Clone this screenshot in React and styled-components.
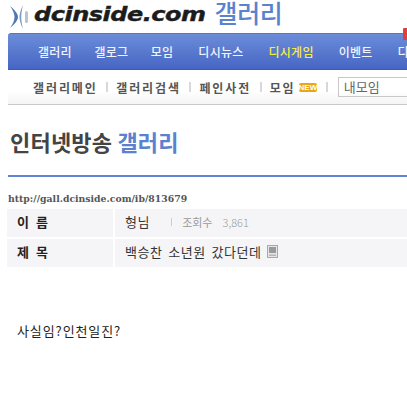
import React from "react";
import styled, { createGlobalStyle } from "styled-components";

const GlobalStyle = createGlobalStyle`
  html, body {
    margin: 0;
    padding: 0;
    background: #fff;
    overflow: hidden;
    font-family: "Noto Sans CJK KR", "Liberation Sans", sans-serif;
  }
`;

const navItems = [
  { label: "갤러리", tight: true },
  { label: "갤로그", tight: true },
  { label: "모임" },
  { label: "디시뉴스" },
  { label: "디시게임", active: true },
  { label: "이벤트" },
  { label: "디시콘" },
];
const subItems = ["갤러리메인", "갤러리검색", "페인사전", "모임"];

function App() {
  return (
    <Page>
      <GlobalStyle />
      <LogoRow>
        <svg width="20" height="26" viewBox="0 0 20 26">
          <path d="M0 2 C5 6 8 10 8 13 C8 16 5 20 0 24 C3 20 4.5 16 4.5 13 C4.5 10 3 6 0 2Z" fill="#4f77b5" />
          <path d="M13 1 C10.5 6 9.5 10 9.5 13 C9.5 16 10.5 20 13 25 C11.8 20 11.3 16 11.3 13 C11.3 10 11.8 6 13 1Z" fill="#7d9cc8" />
          <rect x="15" y="7" width="3" height="12" rx="1.5" fill="#b9c4d2" />
        </svg>
        <LogoText>dcinside.com</LogoText>
        <LogoGallery>갤러리</LogoGallery>
      </LogoRow>
      <MainNav>
        <NavList>
          {navItems.map((item) => (
            <NavItem key={item.label} $active={item.active} $tight={item.tight}>
              {item.label}
            </NavItem>
          ))}
        </NavList>
        <NavBadge />
      </MainNav>
      <SubNav>
        {subItems.map((item) => (
          <React.Fragment key={item}>
            <SubItem>{item}</SubItem>
            {item === "모임" && <NewBadge>NEW</NewBadge>}
            <SubDivider />
          </React.Fragment>
        ))}
        <SearchBox>내모임</SearchBox>
      </SubNav>
      <Title>
        인터넷방송 <TitleAccent>갤러리</TitleAccent>
      </Title>
      <TitleRule />
      <PostUrl>http://gall.dcinside.com/ib/813679</PostUrl>
      <InfoTable>
        <InfoRow>
          <InfoLabel>이 름</InfoLabel>
          <InfoValue>
            형님
            <ViewCount>
              <ViewDivider />
              조회수<ViewNumber>3,861</ViewNumber>
            </ViewCount>
          </InfoValue>
        </InfoRow>
        <InfoRow>
          <InfoLabel>제 목</InfoLabel>
          <InfoValue>
            백승찬 소년원 갔다던데
            <svg width="11" height="13" viewBox="0 0 11 13">
              <rect x="0.5" y="0.5" width="10" height="12" fill="#e6e6e6" stroke="#a8a8a8" />
              <rect x="2" y="2" width="7" height="6" fill="#9a9a9a" />
              <rect x="2" y="9.5" width="7" height="1.5" fill="#b5b5b5" />
            </svg>
          </InfoValue>
        </InfoRow>
      </InfoTable>
      <PostBody>사실임?인천일진?</PostBody>
    </Page>
  );
}

export default App;

const Page = styled.div`
  width: 407px;
  height: 401px;
  overflow: hidden;
`;

const LogoRow = styled.div`
  display: flex;
  align-items: center;
  height: 33px;
  padding-left: 10px;
  box-sizing: border-box;
`;

const LogoText = styled.div`
  margin: 0 0 4px 4px;
  font-family: "DejaVu Sans", sans-serif;
  font-size: 24px;
  font-weight: 700;
  font-style: italic;
  letter-spacing: -0.5px;
  -webkit-text-stroke: 0.5px #1c1c1c;
  color: #1c1c1c;
  white-space: nowrap;
  transform: scaleY(0.8);
`;

const LogoGallery = styled.div`
  margin: 0 0 9px 9px;
  height: 24px;
  line-height: 24px;
  font-size: 25px;
  font-weight: 500;
  letter-spacing: -0.4px;
  color: #5b82ce;
  white-space: nowrap;
`;

const MainNav = styled.div`
  position: relative;
  margin-left: 8px;
  height: 37px;
  border-radius: 3px 0 0 0;
  border-top: 1px solid #5a76bb;
  border-bottom: 1px solid #3e5ba6;
  box-sizing: border-box;
  background: linear-gradient(#6c8cd9, #4666c4);
`;

const NavList = styled.div`
  display: flex;
  padding-left: 30px;
  height: 100%;
  align-items: center;
  white-space: nowrap;
`;

const NavItem = styled.div`
  margin-right: ${(p) => (p.$tight ? "22.5px" : "25px")};
  font-size: 12px;
  font-weight: 500;
  letter-spacing: 0.25px;
  color: ${(p) => (p.$active ? "#f4f03c" : "#f0f4ff")};
`;

const NavBadge = styled.div`
  position: absolute;
  right: 0;
  top: -6px;
  width: 4px;
  height: 12px;
  background: #e0403c;
  border-radius: 1px 0 0 1px;
`;

const SubNav = styled.div`
  display: flex;
  align-items: center;
  margin-left: 8px;
  height: 35px;
  padding-left: 25px;
  box-sizing: border-box;
  border-bottom: 1px solid #c8c8c8;
  background: linear-gradient(#fff 60%, #f4f4f4);
  white-space: nowrap;
`;

const SubItem = styled.div`
  font-size: 12px;
  font-weight: 700;
  letter-spacing: 1.9px;
  color: #555;
`;

const NewBadge = styled.div`
  margin-left: 3px;
  width: 21px;
  text-align: center;
  height: 9px;
  line-height: 9px;
  border-radius: 2px;
  background: #e8a814;
  color: #fff;
  font-family: "Liberation Sans", sans-serif;
  font-size: 8px;
  font-weight: 700;
`;

const SubDivider = styled.div`
  flex: none;
  width: 2px;
  height: 10px;
  margin: 0 8px 0 8.5px;
  background: #d8d8d8;
`;

const SearchBox = styled.div`
  flex: none;
  width: 90px;
  height: 20px;
  margin-left: 2px;
  padding-left: 5px;
  box-sizing: border-box;
  border: 1px solid #c8c8c8;
  font-size: 13px;
  line-height: 18px;
  color: #666;
`;

const Title = styled.div`
  margin: 18px 0 0 10px;
  height: 37px;
  line-height: 37px;
  font-size: 22px;
  font-weight: 700;
  letter-spacing: 0.2px;
  color: #444;
`;

const TitleAccent = styled.span`
  color: #5b82ce;
`;

const TitleRule = styled.div`
  margin: 15px 0 0 8px;
  height: 2px;
  background: #5f84d4;
`;

const PostUrl = styled.div`
  margin: 16px 0 0 8px;
  height: 12px;
  line-height: 12px;
  font-family: "DejaVu Serif", serif;
  font-size: 9.3px;
  font-weight: 700;
  color: #555;
`;

const InfoTable = styled.div`
  display: flex;
  flex-direction: column;
  gap: 2px;
  margin: 4px 0 0 7px;
`;

const InfoRow = styled.div`
  display: flex;
  gap: 2px;
  height: 28px;
`;

const InfoLabel = styled.div`
  flex: none;
  width: 106px;
  padding-left: 10px;
  box-sizing: border-box;
  background: #f5f5f7;
  font-size: 13px;
  font-weight: 700;
  letter-spacing: 1.5px;
  word-spacing: 1px;
  line-height: 26px;
  color: #222;
`;

const InfoValue = styled.div`
  flex: 1;
  display: flex;
  align-items: center;
  gap: 5px;
  padding: 0 0 3px 10px;
  box-sizing: border-box;
  background: #f5f5f7;
  font-size: 13px;
  letter-spacing: 0.6px;
  word-spacing: 2px;
  color: #333;
`;

const ViewCount = styled.span`
  display: flex;
  align-items: center;
  margin-left: 16px;
  font-size: 11px;
  letter-spacing: 0;
  color: #999;
`;

const ViewNumber = styled.span`
  margin-left: 10px;
  font-weight: 300;
`;

const ViewDivider = styled.span`
  width: 1px;
  height: 8px;
  margin-right: 10px;
  background: #ccc;
`;

const PostBody = styled.div`
  margin: 55px 0 0 17px;
  font-size: 13px;
  letter-spacing: 0.9px;
  line-height: 18px;
  color: #222;
`;
